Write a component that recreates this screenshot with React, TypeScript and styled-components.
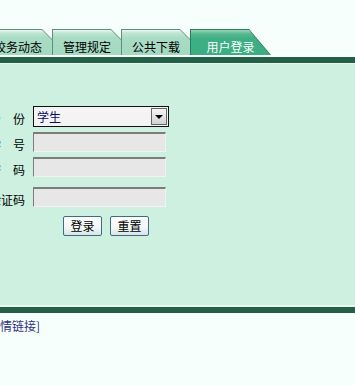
import styled, { createGlobalStyle } from "styled-components"

const GlobalStyle = createGlobalStyle`
  html, body {
    margin: 0;
    padding: 0;
    background: #f7fffd;
  }
  body {
    font-family: "Noto Sans CJK SC", "DejaVu Sans", sans-serif;
    font-size: 12px;
    color: #000;
  }
`

const TABS = [
  { label: "校务动态", w: 70 },
  { label: "管理规定", w: 70 },
  { label: "公共下载", w: 70 },
  { label: "用户登录", w: 81, active: true },
]

const FIELDS = [
  { label: "学　号", gap: 5 },
  { label: "密　码", gap: 5 },
  { label: "验证码", gap: 10 },
]

const App = () => {
  return (
    <>
      <GlobalStyle />
      <Viewport>
        <Frame>
          <TabBar>
            {TABS.map((t) => (
              <TabEdge key={t.label} $w={t.w} $active={t.active}>
                <TabFace $active={t.active}>{t.label}</TabFace>
              </TabEdge>
            ))}
          </TabBar>
          <DarkBar />
          <Panel>
            <Form>
              <Row $gap={0}>
                <Label>身　份</Label>
                <Select>
                  <SelectText>学生</SelectText>
                  <Arrow />
                </Select>
              </Row>
              {FIELDS.map((f) => (
                <Row key={f.label} $gap={f.gap}>
                  <Label>{f.label}</Label>
                  <Input />
                </Row>
              ))}
              <Buttons>
                <Button>登录</Button>
                <Button>重置</Button>
              </Buttons>
            </Form>
          </Panel>
          <DarkBar />
          <Links>[友情链接]</Links>
        </Frame>
      </Viewport>
    </>
  )
}

export default App

const Viewport = styled.div`
  width: 355px;
  height: 385px;
  overflow: hidden;
`
const Frame = styled.div`
  width: 376px;
  margin-left: -21px;
`
const TabBar = styled.div`
  display: flex;
  padding-top: 29px;
  padding-left: 4px;
  height: 26px;
  margin-bottom: 2px;
`
const TabEdge = styled.div<{ $w: number; $active?: boolean }>`
  width: ${(p) => p.$w}px;
  height: 26px;
  margin-right: ${(p) => (p.$active ? 0 : -1)}px;
  padding: 1px 1px 0 1px;
  box-sizing: border-box;
  background: ${(p) => (p.$active ? "#2f7a5c" : "#5e8f79")};
  clip-path: ${(p) =>
    p.$active
      ? "polygon(0 0, calc(100% - 22px) 0, 100% 100%, 0 100%)"
      : "polygon(0 0, calc(100% - 11px) 0, 100% 11px, 100% 100%, 0 100%)"};
`
const TabFace = styled.div<{ $active?: boolean }>`
  height: 100%;
  box-sizing: border-box;
  padding-top: 10px;
  text-align: center;
  line-height: 14px;
  font-size: 12px;
  color: ${(p) => (p.$active ? "#ffffff" : "#000000")};
  background: ${(p) =>
    p.$active
      ? "linear-gradient(#9ad6ba 0, #55b890 4px, #3eae84 9px, #3cac82 100%)"
      : "linear-gradient(#eaf8f1 0, #bfe6d3 3px, #a8dcc4 8px, #a4d9c1 100%)"};
  clip-path: ${(p) =>
    p.$active
      ? "polygon(0 0, calc(100% - 21px) 0, 100% 100%, 0 100%)"
      : "polygon(0 0, calc(100% - 10px) 0, 100% 10px, 100% 100%, 0 100%)"};
`
const DarkBar = styled.div`
  height: 6px;
  background: #245f48;
`
const Panel = styled.div`
  height: 244px;
  box-sizing: border-box;
  background: #cdf0e1;
  border-top: 1px solid #e6f7ef;
  border-bottom: 2px solid #e8f7f0;
  padding-top: 42px;
  padding-left: 10px;
`
const Form = styled.div`
  display: flex;
  flex-direction: column;
`
const Row = styled.div<{ $gap: number }>`
  display: flex;
  align-items: center;
  gap: 8px;
  margin-top: ${(p) => p.$gap}px;
`
const Label = styled.div`
  width: 36px;
  padding-top: 5px;
  line-height: 14px;
  text-align: right;
  white-space: nowrap;
`
const Select = styled.div`
  display: flex;
  align-items: stretch;
  width: 136px;
  height: 21px;
  box-sizing: border-box;
  border: 1px solid #111;
  background: #f4f4f4;
`
const SelectText = styled.div`
  flex: 1;
  padding-left: 3px;
  line-height: 19px;
  color: #0a0a6a;
`
const Arrow = styled.div`
  width: 16px;
  margin: 1px;
  box-sizing: border-box;
  border: 1px solid #666;
  background: linear-gradient(#f6f6f6, #d2d2d2);
  display: flex;
  align-items: center;
  justify-content: center;
  &::after {
    content: "";
    border-left: 4px solid transparent;
    border-right: 4px solid transparent;
    border-top: 4px solid #000;
  }
`
const Input = styled.div`
  width: 133px;
  height: 20px;
  box-sizing: border-box;
  background: #e7e7e7;
  border-top: 2px solid #7c7c7c;
  border-left: 1px solid #7c7c7c;
  border-right: 1px solid #f2f2f2;
  border-bottom: 1px solid #f2f2f2;
`
const Buttons = styled.div`
  display: flex;
  gap: 8px;
  margin-top: 9px;
  padding-left: 74px;
`
const Button = styled.button`
  width: 39px;
  height: 20px;
  padding: 0;
  font-family: "Noto Sans CJK SC", "DejaVu Sans", sans-serif;
  font-size: 12px;
  line-height: 16px;
  color: #000;
  border: 1px solid #3c6e7e;
  border-radius: 2px;
  background: linear-gradient(#ffffff, #f2f6f6 60%, #d9e3e6);
`
const Links = styled.div`
  padding-top: 5px;
  padding-left: 5px;
  line-height: 16px;
  font-size: 12px;
  color: #33337d;
`
